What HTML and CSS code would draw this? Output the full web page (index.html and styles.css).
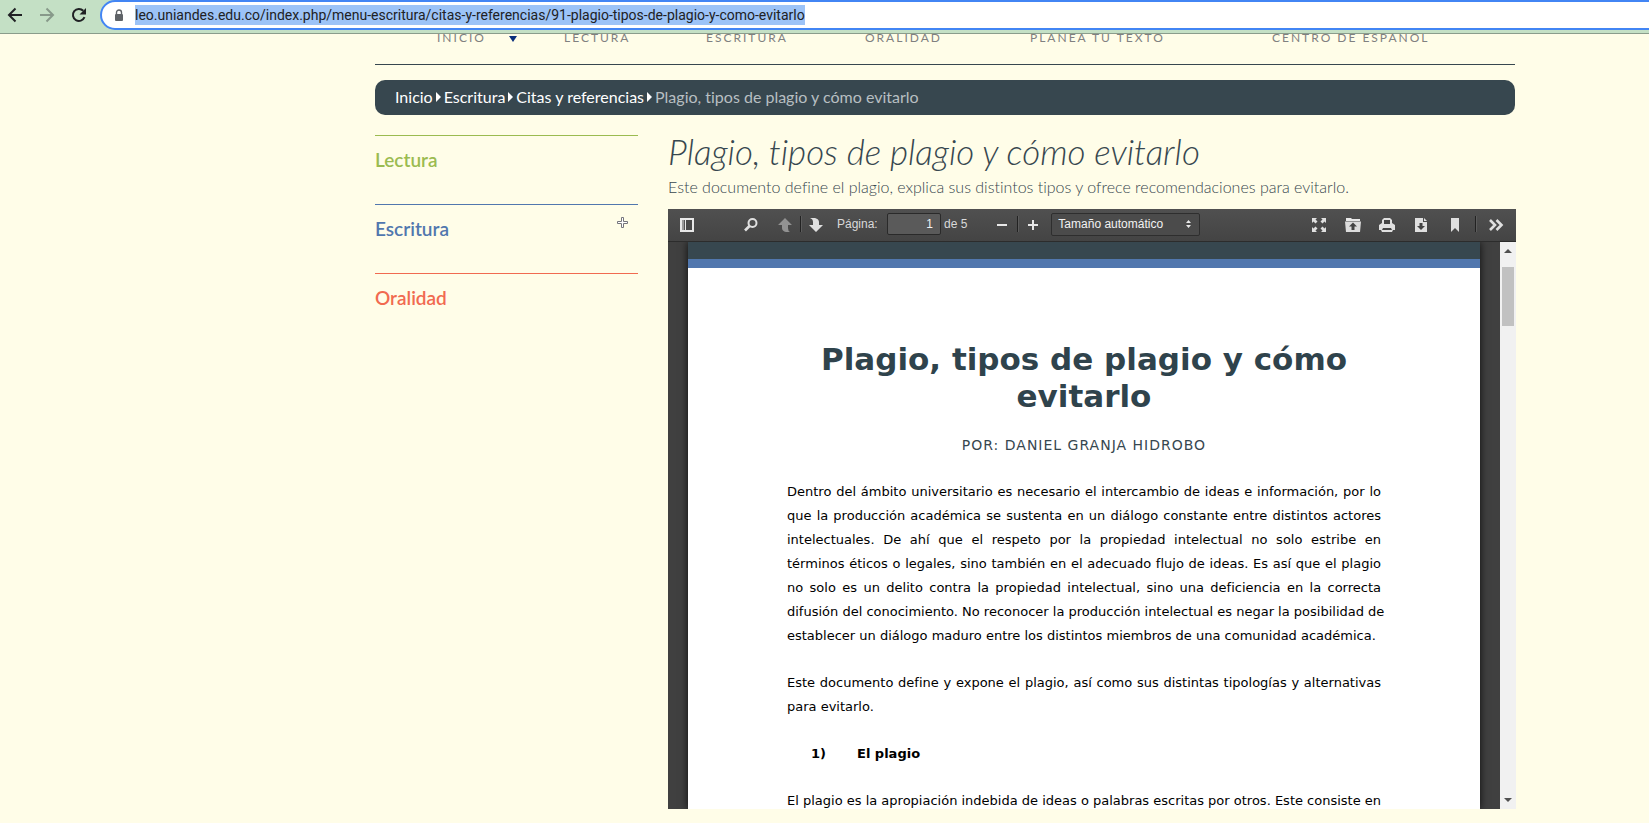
FILE: index.html
```html
<!DOCTYPE html>
<html lang="es">
<head>
    <meta charset="UTF-8">
    <meta name="viewport" content="width=device-width, initial-scale=1.0">
    <title>Plagio, tipos de plagio y cómo evitarlo</title>
    <link rel="stylesheet" href="styles.css">
</head>
<body>

<!-- Browser bar -->
<header class="browser-bar">
    <button type="button" class="browser-button" aria-label="Atrás">
        <svg width="16" height="16" viewBox="0 0 16 16"><path d="M15 8H2M8.500 1.500L2 8l6.500 6.500" fill="none" stroke="#202124" stroke-width="2"/></svg>
    </button>
    <button type="button" class="browser-button" aria-label="Adelante">
        <svg width="16" height="16" viewBox="0 0 16 16"><path d="M1 8h13M7.500 1.500L14 8l-6.500 6.500" fill="none" stroke="#87998a" stroke-width="2"/></svg>
    </button>
    <button type="button" class="browser-button" aria-label="Recargar">
        <svg width="16" height="16" viewBox="0 0 16 16"><path d="M13.500 10.200A6 6 0 1 1 12.300 3.800" fill="none" stroke="#202124" stroke-width="2"/><path d="M15 1v6.500H8.500z" fill="#202124"/></svg>
    </button>
    <div class="address">
        <svg width="10" height="13" viewBox="0 0 10 13"><path d="M2.500 5V3.500a2.500 2.500 0 0 1 5 0V5" fill="none" stroke="#5f6368" stroke-width="1.400"/><rect x="1" y="5" width="8" height="7" rx="1" fill="#5f6368"/></svg>
        <input type="text" class="url" aria-label="Dirección" value="leo.uniandes.edu.co/index.php/menu-escritura/citas-y-referencias/91-plagio-tipos-de-plagio-y-como-evitarlo">
    </div>
</header>

<div class="container">
    <!-- Main menu -->
    <nav class="menu">
        <a href="#">INICIO <svg class="caret" width="10" height="7" viewBox="0 0 10 7"><path d="M1 0h8L5 6z" fill="#0a2f7c"/></svg></a>
        <a href="#">LECTURA</a>
        <a href="#">ESCRITURA</a>
        <a href="#">ORALIDAD</a>
        <a href="#">PLANEA TU TEXTO</a>
        <a href="#">CENTRO DE ESPAÑOL</a>
    </nav>

    <!-- Breadcrumb -->
    <nav class="breadcrumb" aria-label="Ruta">
        <a href="#">Inicio</a>
        <svg width="5" height="10" viewBox="0 0 5 10"><path d="M0 0l5 5-5 5z" fill="#fff"/></svg>
        <a href="#">Escritura</a>
        <svg width="5" height="10" viewBox="0 0 5 10"><path d="M0 0l5 5-5 5z" fill="#fff"/></svg>
        <a href="#">Citas y referencias</a>
        <svg width="5" height="10" viewBox="0 0 5 10"><path d="M0 0l5 5-5 5z" fill="#fff"/></svg>
        <span>Plagio, tipos de plagio y cómo evitarlo</span>
    </nav>

    <div class="columns">
        <aside class="sidebar">
            <a href="#" class="section lectura">Lectura</a>
            <a href="#" class="section escritura">Escritura
                <svg class="pointer" width="11" height="11" viewBox="0 0 11 11"><path d="M4.500 .5h2v4h4v2h-4v4h-2v-4h-4v-2h4z" fill="#fff" stroke="#75757c"/></svg>
            </a>
            <a href="#" class="section oralidad">Oralidad</a>
        </aside>

        <main class="article">
            <h1>Plagio, tipos de plagio y cómo evitarlo</h1>
            <p class="intro">Este documento define el plagio, explica sus distintos tipos y ofrece recomendaciones para evitarlo.</p>

            <!-- PDF viewer -->
            <div class="viewer">
                <div class="toolbar">
                    <button type="button" class="tool" aria-label="Barra lateral">
                        <svg width="16" height="16" viewBox="0 0 16 16"><path d="M1 1h14v14H1z" fill="#e8e8e8"/><path d="M3 3h2v10H3z" fill="#999"/><path d="M7 3h6v10H7z" fill="#484848"/><path d="M5 3h1v10H5z" fill="#555"/></svg>
                    </button>
                    <button type="button" class="tool find" aria-label="Buscar">
                        <svg width="16" height="16" viewBox="0 0 16 16"><circle cx="9.500" cy="6" r="4" fill="none" stroke="#e0e0e0" stroke-width="2"/><path d="M6.500 9L2 13.500" stroke="#e0e0e0" stroke-width="2.600"/></svg>
                    </button>
                    <div class="split">
                        <button type="button" class="tool" aria-label="Página anterior" disabled>
                            <svg width="16" height="16" viewBox="0 0 16 16"><path d="M8 1l7 7h-4v3q0 3 2 4H9q-4-1-4-4V8H1z" fill="#929292"/></svg>
                        </button>
                        <i class="separator"></i>
                        <button type="button" class="tool" aria-label="Página siguiente">
                            <svg width="16" height="16" viewBox="0 0 16 16"><path d="M8 15l7-7h-4V5q0-3-4-4H2q3 1 3 4v3H1z" fill="#e0e0e0"/></svg>
                        </button>
                    </div>
                    <label class="page-label" for="page">Página:</label>
                    <input type="text" class="page-number" id="page" value="1">
                    <span class="page-count">de 5</span>
                    <div class="split zoom">
                        <button type="button" class="tool" aria-label="Reducir">
                            <svg width="16" height="16" viewBox="0 0 16 16"><path d="M3 7h10v2H3z" fill="#e8e8e8"/></svg>
                        </button>
                        <i class="separator"></i>
                        <button type="button" class="tool" aria-label="Aumentar">
                            <svg width="16" height="16" viewBox="0 0 16 16"><path d="M7 3h2v4h4v2H9v4H7V9H3V7h4z" fill="#e8e8e8"/></svg>
                        </button>
                    </div>
                    <div class="scale">
                        <select aria-label="Tamaño">
                            <option>Tamaño automático</option>
                        </select>
                        <svg width="5" height="8" viewBox="0 0 5 8"><path d="M0 3L2.500 0 5 3zM0 5h5L2.500 8z" fill="#e8e8e8"/></svg>
                    </div>

                    <div class="tools-right">
                        <button type="button" class="tool" aria-label="Pantalla completa">
                            <svg width="16" height="16" viewBox="0 0 16 16"><path d="M1 1h5L4.500 2.500l2 2-2 2-2-2L1 6zM15 1v5l-1.500-1.500-2 2-2-2 2-2L10 1zM1 15v-5l1.500 1.500 2-2 2 2-2 2L6 15zM15 15h-5l1.500-1.500-2-2 2-2 2 2L15 10z" fill="#e0e0e0"/></svg>
                        </button>
                        <button type="button" class="tool" aria-label="Abrir">
                            <svg width="16" height="16" viewBox="0 0 16 16"><path d="M1 1h5l1 1h8v2H1z" fill="#e8e8e8"/><path d="M0 4.500h16L15 15H1z" fill="#dcdcdc"/><path d="M8 5.500l4 4H9.500V13h-3V9.500H4z" fill="#444"/></svg>
                        </button>
                        <button type="button" class="tool" aria-label="Imprimir">
                            <svg width="16" height="16" viewBox="0 0 16 16"><path d="M3 6V3l2-2h6l2 2v3l3 2v5h-2l-1 2H3l-1-2H0V8z" fill="#e0e0e0"/><path d="M5 3h6v4H5zM4 11h8l1 2H3z" fill="#444"/></svg>
                        </button>
                        <button type="button" class="tool" aria-label="Descargar">
                            <svg width="16" height="16" viewBox="0 0 16 16"><path d="M2 1h8v4h4v10H2z" fill="#e0e0e0"/><path d="M11 1l3 3h-3z" fill="#e0e0e0"/><path d="M6.500 6h3v3H12l-4 4-4-4h2.500z" fill="#444"/></svg>
                        </button>
                        <button type="button" class="tool" aria-label="Marcador">
                            <svg width="16" height="16" viewBox="0 0 16 16"><path d="M4 1h8v14l-4-4-4 4z" fill="#e0e0e0"/></svg>
                        </button>
                        <i class="separator"></i>
                        <button type="button" class="tool" aria-label="Herramientas">
                            <svg width="16" height="16" viewBox="0 0 16 16"><path d="M2 3l5 5-5 5M8.500 3l5 5-5 5" fill="none" stroke="#e0e0e0" stroke-width="2.600"/></svg>
                        </button>
                    </div>
                </div>

                <div class="viewport">
                    <article class="page">
                        <div class="page-band"></div>
                        <div class="page-body">
                            <h2>Plagio, tipos de plagio y cómo evitarlo</h2>
                            <p class="author">POR: DANIEL GRANJA HIDROBO</p>
                            <p>
                                <span class="line">Dentro del ámbito universitario es necesario el intercambio de ideas e información, por lo</span>
                                <span class="line">que la producción académica se sustenta en un diálogo constante entre distintos actores</span>
                                <span class="line">intelectuales. De ahí que el respeto por la propiedad intelectual no solo estribe en</span>
                                <span class="line">términos éticos o legales, sino también en el adecuado flujo de ideas. Es así que el plagio</span>
                                <span class="line">no solo es un delito contra la propiedad intelectual, sino una deficiencia en la correcta</span>
                                <span class="line">difusión del conocimiento. No reconocer la producción intelectual es negar la posibilidad de</span>
                                <span class="line last">establecer un diálogo maduro entre los distintos miembros de una comunidad académica.</span>
                            </p>
                            <p>
                                <span class="line">Este documento define y expone el plagio, así como sus distintas tipologías y alternativas</span>
                                <span class="line last">para evitarlo.</span>
                            </p>
                            <h3><span>1)</span>El plagio</h3>
                            <p>
                                <span class="line">El plagio es la apropiación indebida de ideas o palabras escritas por otros. Este consiste en</span>
                            </p>
                        </div>
                    </article>
                    <div class="scrollbar">
                        <svg width="8" height="4" viewBox="0 0 8 4"><path d="M0 4l4-4 4 4z" fill="#505050"/></svg>
                        <div class="thumb"></div>
                        <svg class="down" width="8" height="4" viewBox="0 0 8 4"><path d="M0 0h8L4 4z" fill="#505050"/></svg>
                    </div>
                </div>
            </div>
        </main>
    </div>
</div>

</body>
</html>
```
FILE: styles.css
```css
* {
    box-sizing: border-box;
}

body {
    margin: 0;
    background-color: #fffde8;
    color: #37474f;
    font-family: Lato, sans-serif;
    font-variant-ligatures: none;
    overflow: hidden;
}

a {
    color: inherit;
    text-decoration: none;
}

button {
    border: none;
    background: none;
    padding: 0;
}

svg {
    display: block;
    flex: none;
}

/* Browser bar */
.browser-bar {
    position: relative;
    z-index: 1;
    display: flex;
    align-items: flex-start;
    gap: 16px;
    height: 34px;
    padding-left: 7px;
    background-color: #c4e0c5;
    border-bottom: 1px solid #8a9c8b;
}

.browser-button {
    width: 16px;
    height: 30px;
}

.address {
    flex: 1;
    display: flex;
    align-items: center;
    gap: 11px;
    height: 30px;
    margin-left: -3px;
    margin-right: -20px;
    padding-left: 12px;
    background-color: white;
    border: 2px solid #4285f4;
    border-radius: 15px;
}

.url {
    field-sizing: content;
    height: 20px;
    padding: 0;
    border: none;
    outline: none;
    background-color: #9cc3f7;
    color: #202124;
    font-family: Roboto, sans-serif;
    font-size: 14px;
}

.container {
    margin-left: 375px;
    margin-right: 134px;
}

/* Main menu */
.menu {
    display: grid;
    grid-template-columns: 127fr 142fr 159fr 165fr 242fr 243fr;
    margin-top: -10px;
    height: 41px;
    padding-left: 62px;
    border-bottom: 1px solid #37474f;
    color: #808080;
    font-size: 12px;
    line-height: 28px;
    letter-spacing: 2px;
}

.menu a {
    display: flex;
    white-space: nowrap;
}

.caret {
    margin: 12px 0 0 22px;
}

/* Breadcrumb */
.breadcrumb {
    display: flex;
    align-items: center;
    gap: 3px;
    height: 35px;
    margin-top: 15px;
    padding: 0 20px 2px;
    background-color: #37474f;
    border-radius: 10px;
    color: #b8bfc2;
    font-size: 16px;
}

.breadcrumb a {
    color: white;
}

.columns {
    display: flex;
    gap: 30px;
    margin-top: 20px;
}

/* Sidebar */
.sidebar {
    flex: 263;
}

.section {
    position: relative;
    display: block;
    height: 69px;
    padding-top: 12px;
    border-top: 1px solid;
    font-size: 19px;
    line-height: 24px;
    font-weight: 600;
}

.lectura {
    color: #9bbb50;
}

.escritura {
    color: #5177ae;
}

.oralidad {
    color: #f16a50;
}

.pointer {
    position: absolute;
    top: 12px;
    right: 10px;
}

/* Article */
.article {
    flex: 848;
    min-width: 0;
    margin-right: -1px;
}

h1 {
    margin: 0;
    font-size: 35px;
    line-height: 32px;
    font-weight: 300;
    font-style: italic;
}

.intro {
    margin: 8px 0 10px;
    font-size: 16px;
    line-height: 24px;
    font-weight: 300;
    color: #37474f;
}

/* PDF viewer */
.viewer {
    background-color: #404040;
}

.toolbar {
    display: flex;
    align-items: center;
    height: 33px;
    padding: 0 4px 2px 3px;
    background-image: linear-gradient(#505050, #444);
    border-bottom: 1px solid #2c2c2c;
    color: #d9d9d9;
    font-family: "Liberation Sans", sans-serif;
    font-size: 12px;
}

.tool {
    display: flex;
    align-items: center;
    justify-content: center;
    width: 32px;
    height: 26px;
    padding-top: 2px;
}

.find {
    margin-left: 32px;
    margin-right: 3px;
}

.split {
    display: flex;
    align-items: center;
}

.split .tool {
    width: 30px;
}

.separator {
    width: 1px;
    height: 16px;
    background-color: #222;
    box-shadow: 1px 0 0 #5c5c5c;
}

.page-label {
    width: 50px;
    margin-left: 6px;
}

.page-number {
    width: 54px;
    height: 22px;
    padding: 0 7px;
    border: 1px solid #2a2a2a;
    border-radius: 2px;
    background-color: #5a5a5a;
    color: #f2f2f2;
    font: inherit;
    text-align: right;
}

.page-count {
    margin-left: 3px;
}

.zoom {
    margin-left: 20px;
}

.scale {
    display: flex;
    align-items: center;
    width: 149px;
    height: 23px;
    margin-left: 3px;
    padding-right: 8px;
    border: 1px solid #2e2e2e;
    border-radius: 2px;
    background-color: #4b4b4b;
}

.scale select {
    flex: 1;
    appearance: none;
    padding: 0 6px;
    border: none;
    background: none;
    color: #f2f2f2;
    font: inherit;
}

.tools-right {
    display: flex;
    align-items: center;
    gap: 2px;
    margin-left: auto;
}

.tools-right .separator {
    margin: 0 2px;
}

/* Document */
.viewport {
    display: flex;
    height: 567px;
    padding-left: 20px;
    overflow: hidden;
}

.page {
    flex: 1;
    min-width: 0;
    background-color: white;
    box-shadow: 0 0 8px rgba(0, 0, 0, 0.8);
    color: black;
    font-family: "DejaVu Sans", sans-serif;
    font-size: 13px;
    line-height: 24px;
}

.page-band {
    height: 26px;
    background-color: #37474f;
    border-bottom: 9px solid #5177ae;
}

.page-body {
    padding: 73px 99px 0;
}

.page-body p {
    margin: 0 0 23px;
}

/* One line of the PDF text layer */
.line {
    display: block;
    white-space: nowrap;
    text-align: justify;
    text-align-last: justify;
}

.last {
    text-align-last: left;
}

.page-body h2 {
    margin: 0 0 18px;
    color: #2f434c;
    font-size: 31px;
    line-height: 37px;
    text-align: center;
}

.page-body .author {
    color: #37474f;
    font-size: 14px;
    letter-spacing: 1px;
    text-align: center;
}

.page-body h3 {
    display: flex;
    margin: 0 0 23px 24px;
    font-size: 13px;
}

.page-body h3 span {
    width: 46px;
}

/* Scrollbar */
.scrollbar {
    display: flex;
    flex-direction: column;
    align-items: center;
    width: 16px;
    margin-left: 20px;
    padding: 7px 0;
    background-color: #f1f1f1;
}

.thumb {
    width: 12px;
    height: 59px;
    margin-top: 14px;
    background-color: #c1c1c1;
}

.down {
    margin-top: auto;
}
```
